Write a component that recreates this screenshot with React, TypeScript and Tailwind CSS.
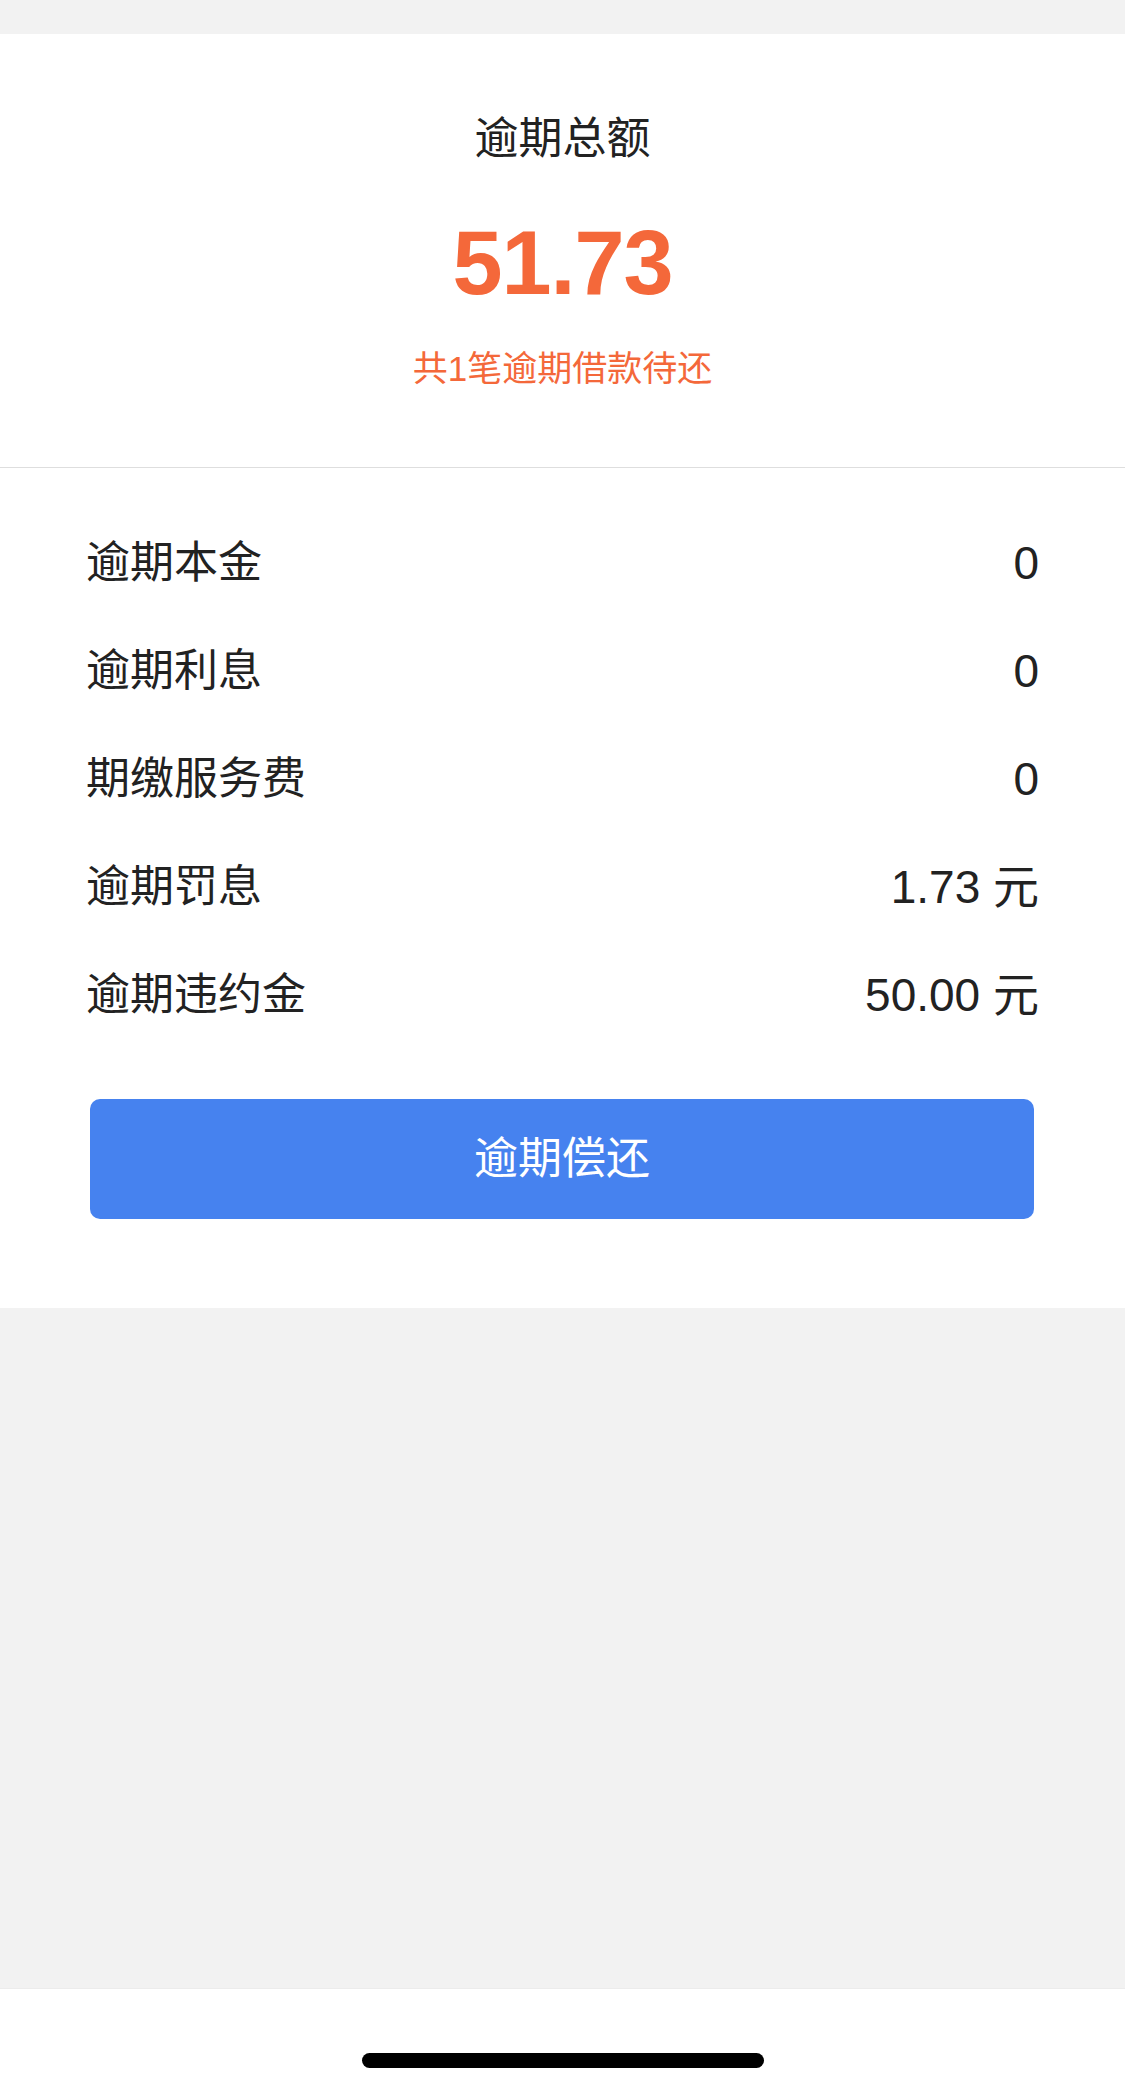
const font = {
  fontFamily: '"Liberation Sans", "Noto Sans CJK SC", sans-serif',
};

const ROWS = [
  { label: "逾期本金", value: "0" },
  { label: "逾期利息", value: "0" },
  { label: "期缴服务费", value: "0" },
  { label: "逾期罚息", value: "1.73 元" },
  { label: "逾期违约金", value: "50.00 元" },
];

export default function App() {
  return (
    <div className="w-[1125px] min-h-[2092px] bg-[#f2f2f2] flex flex-col" style={font}>
      {/* status area */}
      <div className="h-[34px] bg-[#f2f2f2]" />

      {/* Summary header */}
      <div className="bg-white flex flex-col items-center pt-[75px] pb-[73px] border-b border-[#dedede]">
        <div className="text-[44px] leading-[60px] text-[#222222]">逾期总额</div>
        <div className="mt-[44px] text-[90px] leading-[100px] font-bold text-[#f4683a] tracking-[-1px]">
          51.73
        </div>
        <div className="mt-[31px] text-[35px] leading-[50px] text-[#f4683a]">共1笔逾期借款待还</div>
      </div>

      {/* Detail rows */}
      <div className="bg-white px-[86px] pt-[41px] pb-[89px]">
        {ROWS.map((row) => (
          <div key={row.label} className="h-[108px] flex items-center justify-between text-[#222222]">
            <span className="text-[44px]">{row.label}</span>
            <span className="text-[46px]">{row.value}</span>
          </div>
        ))}
        <button className="mt-[50px] mx-[4px] w-[944px] h-[120px] rounded-[10px] bg-[#4682ef] text-white text-[44px] flex items-center justify-center">
          逾期偿还
        </button>
      </div>

      <div className="flex-1" />

      {/* Home indicator */}
      <div className="h-[104px] bg-white border-t border-[#ececec] flex justify-center pt-[64px]">
        <div className="w-[402px] h-[15px] rounded-full bg-black" />
      </div>
    </div>
  );
}
